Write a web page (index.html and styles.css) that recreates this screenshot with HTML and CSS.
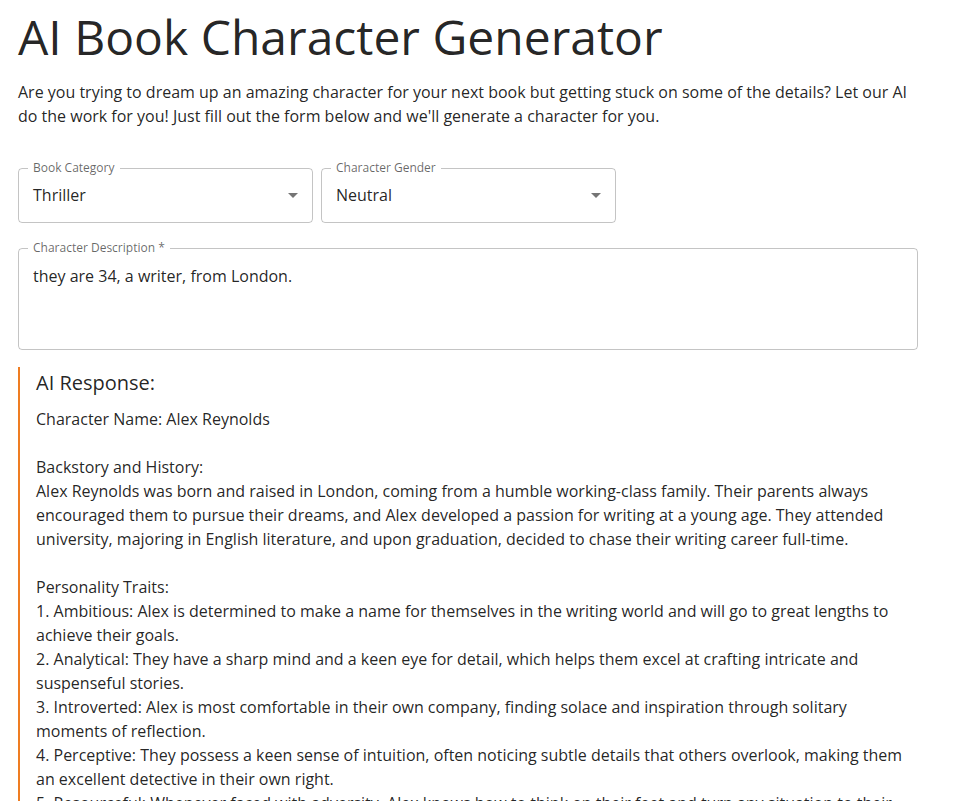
FILE: index.html
```html
<!DOCTYPE html>
<html lang="en">
<head>
    <meta charset="UTF-8">
    <meta name="viewport" content="width=device-width, initial-scale=1.0">
    <title>AI Book Character Generator</title>
    <link rel="stylesheet" href="styles.css">
</head>
<body>
    <div class="container">
        <h1 class="title">AI Book Character Generator</h1>
        <p class="intro">Are you trying to dream up an amazing character for your next book but getting stuck on some of the details? Let our AI do the work for you! Just fill out the form below and we'll generate a character for you.</p>

        <div class="select-row">
            <fieldset class="field select-field">
                <legend>Book Category</legend>
                <div class="select-value">
                    <span>Thriller</span>
                    <svg class="arrow" viewBox="0 0 24 24" width="24" height="24"><path d="M7 10l5 5 5-5z"/></svg>
                </div>
            </fieldset>
            <fieldset class="field select-field">
                <legend>Character Gender</legend>
                <div class="select-value">
                    <span>Neutral</span>
                    <svg class="arrow" viewBox="0 0 24 24" width="24" height="24"><path d="M7 10l5 5 5-5z"/></svg>
                </div>
            </fieldset>
        </div>

        <fieldset class="field text-field">
            <legend>Character Description *</legend>
            <textarea class="description" rows="3">they are 34, a writer, from London.</textarea>
        </fieldset>

        <div class="response">
            <h2 class="response-title">AI Response:</h2>
            <div class="response-text">Character Name: Alex Reynolds

Backstory and History:
Alex Reynolds was born and raised in London, coming from a humble working-class family. Their parents always encouraged them to pursue their dreams, and Alex developed a passion for writing at a young age. They attended university, majoring in English literature, and upon graduation, decided to chase their writing career full-time.

Personality Traits:
1. Ambitious: Alex is determined to make a name for themselves in the writing world and will go to great lengths to achieve their goals.
2. Analytical: They have a sharp mind and a keen eye for detail, which helps them excel at crafting intricate and suspenseful stories.
3. Introverted: Alex is most comfortable in their own company, finding solace and inspiration through solitary moments of reflection.
4. Perceptive: They possess a keen sense of intuition, often noticing subtle details that others overlook, making them an excellent detective in their own right.
5. Resourceful: Whenever faced with adversity, Alex knows how to think on their feet and turn any situation to their advantage.</div>
        </div>
    </div>
</body>
</html>
```

FILE: styles.css
```css
body {
    margin: 0;
    font-family: "Open Sans", "Liberation Sans", sans-serif;
    color: rgba(0, 0, 0, 0.87);
    background-color: #fff;
}
.container {
    width: 900px;
    padding: 0 18px;
}
.title {
    font-size: 48px;
    font-weight: 400;
    line-height: 56px;
    margin: 9px 0 0;
}
.intro {
    font-size: 16px;
    line-height: 24px;
    margin: 15px 0 0;
}
.select-row {
    display: flex;
    gap: 8px;
    margin-top: 32px;
}
.field {
    margin: 0;
    border: 1px solid rgba(0, 0, 0, 0.23);
    border-radius: 4px;
    padding: 0 14px;
    min-width: 0;
}
.field legend {
    font-size: 12px;
    line-height: 16px;
    color: rgba(0, 0, 0, 0.6);
    padding: 0 5px;
    margin-left: -5px;
}
.select-field {
    width: 295px;
    box-sizing: border-box;
    padding: 7px 7px 15px 14px;
}
.select-value {
    display: flex;
    align-items: center;
    justify-content: space-between;
    font-size: 16px;
    line-height: 24px;
}
.arrow {
    fill: rgba(0, 0, 0, 0.54);
}
.text-field {
    margin-top: 17px;
    padding: 8px 14px 13px;
}
.description {
    display: block;
    width: 100%;
    border: none;
    outline: none;
    resize: none;
    padding: 0;
    font-family: inherit;
    font-size: 16px;
    line-height: 24px;
    color: inherit;
}
.response {
    margin-top: 17px;
    border-left: 2px solid #ef7d22;
    padding-left: 16px;
}
.response-title {
    font-size: 20px;
    font-weight: 400;
    line-height: 32px;
    margin: 0 0 8px;
}
.response-text {
    white-space: pre-wrap;
    font-size: 16px;
    line-height: 24px;
}
```
